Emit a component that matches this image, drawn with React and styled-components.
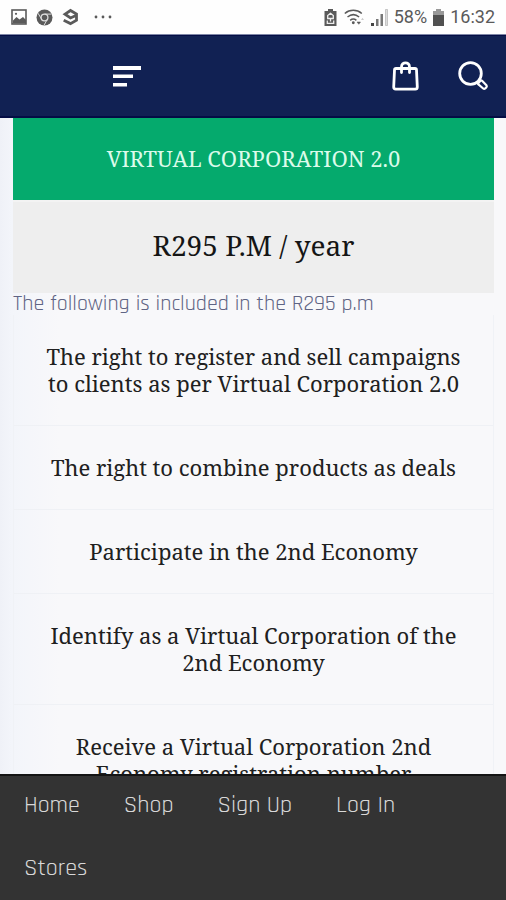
import React from 'react';
import styled, { createGlobalStyle } from 'styled-components';

const serif = '"Noto Serif", "DejaVu Serif Condensed", "Liberation Serif", serif';
const sans = 'Rajdhani, Roboto, "Liberation Sans", sans-serif';

const GlobalStyle = createGlobalStyle`
  *, *::before, *::after { box-sizing: border-box; }
  body { margin: 0; background: #f8f8fa; }
`;

const Shell = styled.div`
  display: flex;
  flex-direction: column;
  height: 100vh;
  background: #f8f8fa;
  font-family: ${sans};
`;

const StatusBar = styled.div`
  display: flex;
  flex: none;
  align-items: center;
  justify-content: space-between;
  height: 35px;
  padding: 0 11px;
  background: #fefefe;
  border-bottom: 1px solid #7e86a6;
  color: #5a5a5a;
  font: 400 18px/20px Roboto, sans-serif;
  svg { display: block; }
`;

const StatusGroup = styled.div`
  display: flex;
  align-items: center;
  gap: ${(p) => p.$gap}px;
`;

const Header = styled.header`
  display: flex;
  flex: none;
  align-items: center;
  justify-content: space-between;
  height: 83px;
  padding: 0 17px 0 113px;
  background: #112153;
  border-top: 1px solid #040d45;
  border-bottom: 2px solid #040d45;
`;

const HeaderActions = styled.div`
  display: flex;
  gap: 39px;
`;

const IconButton = styled.button`
  display: block;
  padding: 0;
  border: 0;
  background: none;
  color: #fff;
  cursor: pointer;
  svg { display: block; }
`;

const Content = styled.main`
  flex: 1;
  min-height: 0;
  padding: 0 12px 0 13px;
  overflow-y: auto;
  scrollbar-width: none;
  background: linear-gradient(90deg, #eff1f7 0, #f3f5fa 12px, #f8f8fa 60px);
`;

const PlanName = styled.h1`
  margin: 0;
  padding: 27px 0 28px;
  background: #05aa6d;
  color: #dbfbea;
  font: 400 22px/27px ${serif};
  text-align: center;
`;

const PlanPrice = styled.h2`
  margin: 0;
  padding: 26px 0 31px;
  border-top: 2px solid #f3f3f3;
  background: #eeeeee;
  color: #151515;
  font: 400 28px/34px ${serif};
  text-align: center;
`;

const Intro = styled.p`
  margin: 0;
  color: #5f6484;
  font: 400 22px/22px ${sans};
`;

const FeatureList = styled.ul`
  margin: 0;
  padding: 0;
  list-style: none;
  border: solid #f0f2f6;
  border-width: 0 1px;
`;

const Feature = styled.li`
  padding: 28px 20px;
  border-bottom: 1px solid #eff1f5;
  color: #202020;
  font: 400 22px/27px ${serif};
  text-align: center;
`;

const BottomNav = styled.nav`
  display: flex;
  flex: none;
  flex-wrap: wrap;
  padding: 0 2px;
  box-shadow: inset 0 2px #141414;
  background: #333333;
`;

const NavLink = styled.a`
  padding: 18px 22px;
  color: #d8d8d8;
  font: 400 24px/27px ${sans};
  text-decoration: none;
`;

const features = [
  'The right to register and sell campaigns to clients as per Virtual Corporation 2.0',
  'The right to combine products as deals',
  'Participate in the 2nd Economy',
  'Identify as a Virtual Corporation of the 2nd Economy',
  'Receive a Virtual Corporation 2nd Economy registration number',
];

const links = ['Home', 'Shop', 'Sign Up', 'Log In', 'Stores'];

const PictureIcon = () => (
  <svg width="16" height="16" viewBox="0 0 16 16" fill="none" aria-hidden="true">
    <rect x="1" y="1" width="14" height="14" stroke="currentColor" strokeWidth="1.600" />
    <path d="M2 11.500 5.500 8l3 2.500L12 8l3 3v3.500H2z" fill="currentColor" />
    <circle cx="5" cy="4.800" r="1.100" fill="currentColor" />
  </svg>
);

const BrowserIcon = () => (
  <svg width="17" height="17" viewBox="0 0 17 17" fill="none" aria-hidden="true">
    <circle cx="8.500" cy="8.500" r="8" fill="currentColor" />
    <circle cx="8.500" cy="8.500" r="3.400" fill="#5a5a5a" stroke="#ddd" strokeWidth="1.300" />
    <path d="M8.500 5.100H15.500M5.600 10.200 2 4.200M11.400 10.200 8 16.300" stroke="#ddd" strokeWidth="1" />
  </svg>
);

const NineIcon = () => (
  <svg width="17" height="18" viewBox="0 0 17 18" fill="none" stroke="currentColor" strokeWidth="2.800" aria-hidden="true">
    <path d="M14.500 7.200 8.500 10 3 6.200 8.500 2.500l6 3.500v6.200l-6 3.400-6.800-3.400" />
  </svg>
);

const DotsIcon = () => (
  <svg width="18" height="4" viewBox="0 0 18 4" fill="currentColor" aria-hidden="true">
    <circle cx="2" cy="2" r="1.400" />
    <circle cx="9" cy="2" r="1.400" />
    <circle cx="16" cy="2" r="1.400" />
  </svg>
);

const SaverIcon = () => (
  <svg width="13" height="17" viewBox="0 0 13 17" fill="none" aria-hidden="true">
    <path d="M4 0h5v2h3.500v15H.5V2H4z" fill="currentColor" />
    <path d="M6.500 4.300 9.300 6.500v3H3.700v-3zM3.300 11.500v2.800h6.400v-2.800M6.500 9.500v3" stroke="#eee" strokeWidth="1.300" />
  </svg>
);

const WifiIcon = () => (
  <svg width="21" height="17" viewBox="0 0 21 17" fill="none" stroke="currentColor" strokeWidth="1.500" aria-hidden="true">
    <path d="M.8 4.500c5-4.200 12-4.200 17 0M3.500 8c3.700-3 8-3 11.600 0M6.200 11.300c2-1.600 4.200-1.600 6.200 0" />
    <circle cx="9.300" cy="13.800" r=".7" />
    <path d="m13 13 1.800 2.300L16.500 13z" fill="currentColor" strokeWidth=".5" />
    <path d="m17 11 1.500-2.200L20 11z" fill="#ccc" stroke="none" />
  </svg>
);

const SignalIcon = () => (
  <svg width="17" height="17" viewBox="0 0 17 17" aria-hidden="true">
    <path d="M0 14h3v3H0z" fill="#444" />
    <path d="M5 10h2.500v7H5zM9.500 5H12v12H9.500z" fill="#777" />
    <path d="M14.500.5h2v16h-2z" fill="#ddd" stroke="#aaa" strokeWidth=".6" />
  </svg>
);

const BatteryIcon = () => (
  <svg width="11" height="17" viewBox="0 0 11 17" aria-hidden="true">
    <path d="M3 0h5v2h3v5H0V2h3z" fill="#999" />
    <path d="M0 6h11v11H0z" fill="#505050" />
  </svg>
);

const MenuIcon = () => (
  <svg width="28" height="22" viewBox="0 0 28 22" fill="currentColor" aria-hidden="true">
    <path d="M0 1h28v4H0zM0 9.500h20v3.500H0zM0 18h14v3.500H0z" />
  </svg>
);

const BagIcon = () => (
  <svg width="27" height="30" viewBox="0 0 27 30" fill="none" stroke="currentColor" strokeWidth="2.800" strokeLinecap="round" strokeLinejoin="round" aria-hidden="true">
    <path d="M4 7.500h19q1.400 0 1.500 1.500l.8 17q0 2.200-2 2.200H3.700q-2 0-2-2.200l.8-17q.1-1.500 1.500-1.500z" />
    <path d="M9.500 11.500V6c0-5.600 8-5.600 8 0v5.500" />
  </svg>
);

const SearchIcon = () => (
  <svg width="31" height="30" viewBox="0 0 31 30" fill="none" stroke="currentColor" strokeWidth="2.800" strokeLinejoin="round" aria-hidden="true">
    <circle cx="12.500" cy="12.500" r="10.800" />
    <path d="m20 20 1.500 1.500" />
    <path d="m20 22.500 2.500-2.700q.8-.7 1.600 0l4.300 4.400q.8 1 0 2l-1.200 1.300q-1 .9-2 0l-5.100-4.300q-.6-.4-.1-.7z" strokeWidth="2.200" />
  </svg>
);

export default function App() {
  return (
    <Shell>
      <GlobalStyle />
      <StatusBar>
        <StatusGroup $gap={15}>
          <StatusGroup $gap={9}>
            <PictureIcon />
            <BrowserIcon />
            <NineIcon />
          </StatusGroup>
          <DotsIcon />
        </StatusGroup>
        <StatusGroup $gap={6}>
          <StatusGroup $gap={7}>
            <SaverIcon />
            <WifiIcon />
          </StatusGroup>
          <SignalIcon />
          <span>58%</span>
          <BatteryIcon />
          <span>16:32</span>
        </StatusGroup>
      </StatusBar>
      <Header>
        <IconButton type="button" aria-label="Menu"><MenuIcon /></IconButton>
        <HeaderActions>
          <IconButton type="button" aria-label="Shopping bag"><BagIcon /></IconButton>
          <IconButton type="button" aria-label="Search"><SearchIcon /></IconButton>
        </HeaderActions>
      </Header>
      <Content>
        <PlanName>VIRTUAL CORPORATION 2.0</PlanName>
        <PlanPrice>R295 P.M / year</PlanPrice>
        <Intro>The following is included in the R295 p.m</Intro>
        <FeatureList>
          {features.map((text) => <Feature key={text}>{text}</Feature>)}
        </FeatureList>
      </Content>
      <BottomNav>
        {links.map((label) => <NavLink key={label} href="#">{label}</NavLink>)}
      </BottomNav>
    </Shell>
  );
}
